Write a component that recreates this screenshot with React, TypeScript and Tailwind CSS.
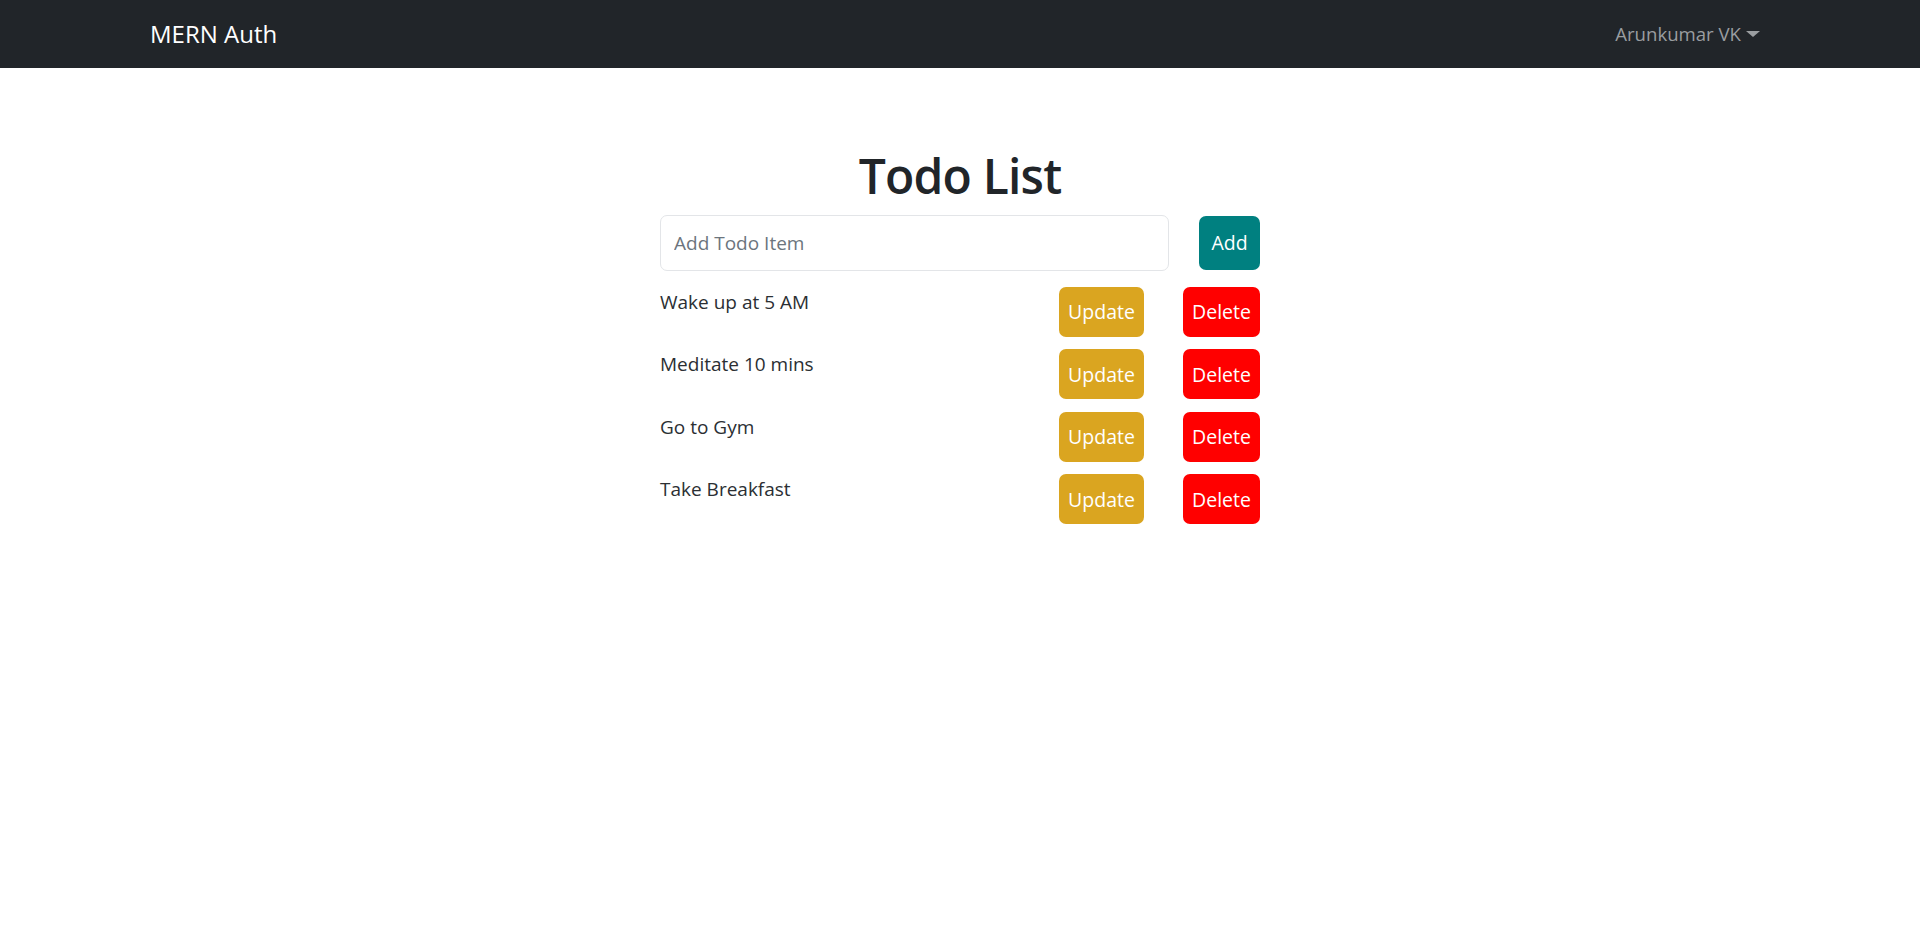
import { useState } from 'react'

const todos = ['Wake up at 5 AM', 'Meditate 10 mins', 'Go to Gym', 'Take Breakfast']

function Navbar() {
  return (
    <nav className="h-[68px] w-full bg-[#212529]">
      <div className="mx-auto flex h-full w-[1650px] items-center justify-between px-[15px]">
        <a className="text-[24px] text-white" href="#">
          MERN Auth
        </a>
        <button className="flex items-center gap-[5px] pr-[10px] text-[18.6px] text-[#9a9da0]">
          Arunkumar VK
          <span className="h-0 w-0 border-x-[7px] border-t-[6px] border-x-transparent border-t-[#9a9da0]" />
        </button>
      </div>
    </nav>
  )
}

export default function App() {
  const [text, setText] = useState('')

  return (
    <div className="min-h-screen bg-white font-['Open_Sans',sans-serif] text-[#212529]">
      <Navbar />

      <main className="mx-auto w-[600px] pt-[79px]">
        <h1 className="mb-[10px] text-center text-[48px] leading-[1.2] font-semibold tracking-[-0.8px]">
          Todo List
        </h1>

        {/* Add form */}
        <div className="flex items-center">
          <input
            value={text}
            onChange={(e) => setText(e.target.value)}
            placeholder="Add Todo Item"
            className="h-[56px] w-[509px] rounded-[7px] border border-[#e3e5e8] px-[13px] text-[19px] outline-none placeholder:text-[#6c757d]"
          />
          <button className="ml-[30px] h-[54px] w-[61px] rounded-[7px] bg-[#008080] text-[19.5px] text-white">
            Add
          </button>
        </div>

        {/* Items */}
        <div className="mt-[16px] flex flex-col gap-[12.6px]">
          {todos.map((todo) => (
            <div key={todo} className="flex h-[50px] items-start">
              <span className="flex-1 text-[19px] leading-[30px] text-[#2b2f33]">{todo}</span>
              <button className="h-[50px] w-[85px] rounded-[7px] bg-[#daa520] text-[19.5px] text-white">
                Update
              </button>
              <button className="ml-[39px] h-[50px] w-[77px] rounded-[7px] bg-[#ff0000] text-[19.5px] text-white">
                Delete
              </button>
            </div>
          ))}
        </div>
      </main>
    </div>
  )
}
